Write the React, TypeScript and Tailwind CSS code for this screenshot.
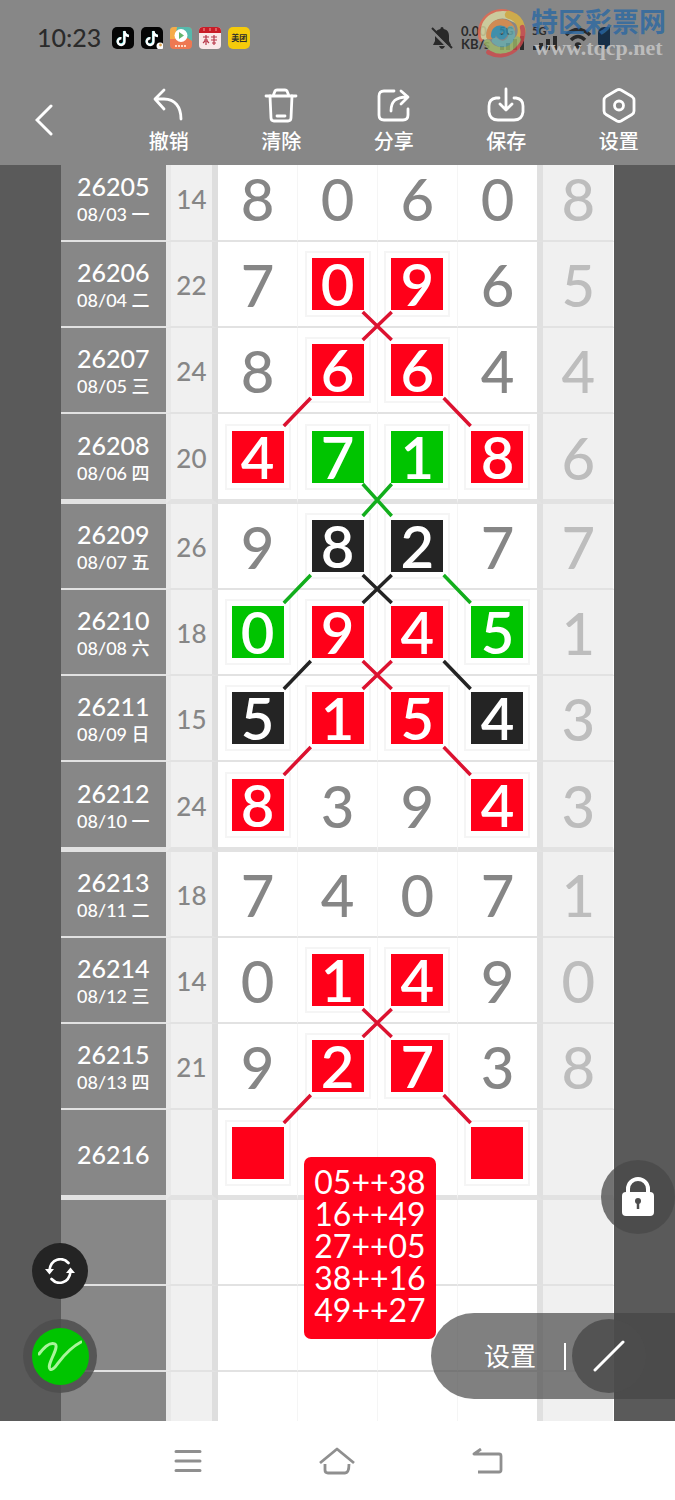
import React from "react";

type Mark = "r" | "g" | "k" | "";

interface Draw {
  issue: string;
  date?: string;
  sum?: number;
  digits: string;
  last?: string;
  marks?: Mark[];
}

const draws: Draw[] = [
  { issue: "26205", date: "08/03 一", sum: 14, digits: "8060", last: "8" },
  { issue: "26206", date: "08/04 二", sum: 22, digits: "7096", last: "5", marks: ["", "r", "r", ""] },
  { issue: "26207", date: "08/05 三", sum: 24, digits: "8664", last: "4", marks: ["", "r", "r", ""] },
  { issue: "26208", date: "08/06 四", sum: 20, digits: "4718", last: "6", marks: ["r", "g", "g", "r"] },
  { issue: "26209", date: "08/07 五", sum: 26, digits: "9827", last: "7", marks: ["", "k", "k", ""] },
  { issue: "26210", date: "08/08 六", sum: 18, digits: "0945", last: "1", marks: ["g", "r", "r", "g"] },
  { issue: "26211", date: "08/09 日", sum: 15, digits: "5154", last: "3", marks: ["k", "r", "r", "k"] },
  { issue: "26212", date: "08/10 一", sum: 24, digits: "8394", last: "3", marks: ["r", "", "", "r"] },
  { issue: "26213", date: "08/11 二", sum: 18, digits: "7407", last: "1" },
  { issue: "26214", date: "08/12 三", sum: 14, digits: "0149", last: "0", marks: ["", "r", "r", ""] },
  { issue: "26215", date: "08/13 四", sum: 21, digits: "9273", last: "8", marks: ["", "r", "r", ""] },
  { issue: "26216", digits: "    ", marks: ["r", "", "", "r"] },
  { issue: "", digits: "    " },
  { issue: "", digits: "    " },
  { issue: "", digits: "    " },
];

const markColor: Record<string, string> = {
  r: "bg-[#ff0019]",
  g: "bg-[#00c400]",
  k: "bg-[#242424]",
};

const RED = "#dc1230";
const GREEN = "#12ae1c";
const BLACK = "#242424";

/* Crossings sit between the two middle columns, branches fan out to the outer ones. */
const crossings: [number, string][] = [
  [170, RED],
  [344, GREEN],
  [433, BLACK],
  [519, RED],
  [867, RED],
];
const branches: [number, string][] = [
  [256, RED],
  [433, GREEN],
  [519, BLACK],
  [605, RED],
  [953, RED],
];

function TrendLines() {
  return (
    <svg
      className="pointer-events-none absolute inset-x-0 top-0 h-[1265px] w-full"
      viewBox="0 0 554 1265"
      preserveAspectRatio="none"
      fill="none"
      strokeWidth="3.500"
    >
      {crossings.map(([y, c]) => {
        const h = c === GREEN ? 16 : 14;
        return <path key={y} stroke={c} d={`M302 ${y - h}L331 ${y + h}M331 ${y - h}L302 ${y + h}`} />;
      })}
      {branches.map(([y, c]) => (
        <path key={y} stroke={c} d={`M250 ${y - 14}L223 ${y + 14}M383 ${y - 14}L410 ${y + 14}`} />
      ))}
    </svg>
  );
}

function DigitCell({ value, mark, edge, rule }: { value: string; mark: Mark; edge: boolean; rule: string }) {
  return (
    <td className={`bg-white p-0 ${rule} ${edge ? "border-r-6 border-r-[#e0e0e0]" : "border-r border-r-[#f5f5f5]"}`}>
      {mark ? (
        <div className="mx-auto flex size-[66px] items-center justify-center border-2 border-[#f5f5f5]">
          <div
            className={`flex size-[52px] items-center justify-center text-[58px] leading-none font-semibold text-white ${markColor[mark]}`}
          >
            {value.trim()}
          </div>
        </div>
      ) : (
        <div className="pt-[2px] text-center text-[58px] leading-none font-medium text-[#868686]">{value.trim()}</div>
      )}
    </td>
  );
}

function TrendTable() {
  return (
    <table className="w-full table-fixed border-separate border-spacing-0">
      <colgroup>
        <col className="w-[19%]" />
        <col className="w-[9.4%]" />
        <col className="w-[14.5%]" />
        <col className="w-[14.4%]" />
        <col className="w-[14.4%]" />
        <col className="w-[15.5%]" />
        <col className="w-[12.8%]" />
      </colgroup>
      <tbody>
        {draws.map((d, i) => {
          const thick = i % 4 === 3;
          const rule = thick ? "border-b-5 border-b-[#e2e2e2]" : "border-b-2 border-b-[#e2e2e2]";
          return (
            <tr key={i} className={thick ? "h-[90px]" : "h-[86px]"}>
              <th scope="row" className={`bg-[#878787] p-0 font-medium text-white ${rule}`}>
                <div className="pt-[2px] text-[25px] leading-[30px]">{d.issue}</div>
                {d.date && <div className="text-[18px] leading-[26px] font-medium">{d.date}</div>}
              </th>
              <td
                className={`border-r-6 border-l-5 border-r-[#dedede] border-l-[#e8e8e8] bg-[#f0f0f0] p-0 text-center text-[26px] font-medium text-[#868686] ${rule}`}
              >
                <div className="pt-[3px]">{d.sum}</div>
              </td>
              {d.digits.split("").map((v, n) => (
                <DigitCell key={n} value={v} mark={d.marks ? d.marks[n] : ""} edge={n === 3} rule={rule} />
              ))}
              <td className={`border-r border-r-white bg-[#f0f0f0] p-0 ${rule}`}>
                <div className="pt-[2px] text-center text-[58px] leading-none font-medium text-[#bdbdbd]">{d.last}</div>
              </td>
            </tr>
          );
        })}
      </tbody>
    </table>
  );
}

const tools: { label: string; icon: React.ReactNode }[] = [
  { label: "撤销", icon: <path d="M11 1L2 10L11 20M3 10H11C22 10 28 18 28 30" /> },
  {
    label: "清除",
    icon: (
      <>
        <path d="M1 7H31M8 7L10 2Q10.500 1 12 1H20Q21.500 1 22 2L24 7" />
        <path d="M5 7L6 29Q6.200 32 9 32H23Q25.800 32 26 29L27 7M12 27H20" />
      </>
    ),
  },
  {
    label: "分享",
    icon: (
      <>
        <path d="M16 2H6Q1 2 1 7V26Q1 31 6 31H25Q30 31 30 26V20" />
        <path d="M13 22C13 12 18 8 29 8M23 2L30 8L23 15" />
      </>
    ),
  },
  {
    label: "保存",
    icon: (
      <>
        <path d="M9 9H6Q-1 10 -1 17V23Q0 31 8 31H24Q32 31 33 23V17Q33 10 26 9H24" />
        <path d="M16 0V20M10 15L16 21L22 15" />
      </>
    ),
  },
  {
    label: "设置",
    icon: (
      <>
        <path d="M14 1Q16 0 18 1L29 7.500Q31 9 31 11V22Q31 24 29 25.500L18 32Q16 33 14 32L3 25.500Q1 24 1 22V11Q1 9 3 7.500Z" />
        <circle cx="16" cy="16.500" r="4.500" />
      </>
    ),
  },
];

function TikTokIcon({ badge }: { badge?: boolean }) {
  return (
    <svg className="size-[22px]" viewBox="0 0 22 22">
      <rect width="22" height="22" rx="5" fill="#050505" />
      <path d="M12 4V14A3.200 3.200 0 1 1 9 11M12 4C12.500 7 14 8.300 16.500 8.500" fill="none" stroke="#43dfe0" strokeWidth="2.200" />
      <path d="M12.500 4V14.300A3.400 3.400 0 1 1 9.500 11.200M12.500 4.500C13 7.500 14.500 8.800 17 9" fill="none" stroke="#fff" strokeWidth="2.400" />
      {badge && (
        <>
          <circle cx="19" cy="19" r="3.500" fill="#fff" />
          <circle cx="19.500" cy="18" r="1.400" fill="#d8a04b" />
        </>
      )}
    </svg>
  );
}

function StatusBar() {
  return (
    <div className="relative flex h-[75px] items-center gap-[7px] pl-[37px] text-[#2b2b2b]">
      <time className="mr-1 text-[25px] leading-none font-medium">10:23</time>
      <TikTokIcon />
      <TikTokIcon badge />
      <svg className="size-[22px]" viewBox="0 0 22 22">
        <rect width="22" height="22" rx="4" fill="#ee7852" />
        <path d="M4 0H18Q22 0 22 4V14L12 7L0 11V4Q0 0 4 0Z" fill="#56b9ac" />
        <path d="M0 4Q0 0 4 0H7L5 12H0Z" fill="#f6ab48" />
        <circle cx="11" cy="8.500" r="6.500" fill="#fff" />
        <path d="M9 5L14 8.500L9 12Z" fill="#65b56e" />
        <path d="M5 19H17" stroke="#ffd9c5" strokeWidth="2" strokeDasharray="2 1" />
      </svg>
      <svg className="size-[22px]" viewBox="0 0 22 22">
        <rect width="22" height="22" rx="4" fill="#fae9e9" />
        <path d="M0 6V4Q0 0 4 0H18Q22 0 22 4V6Z" fill="#c91c27" />
        <path d="M5 1V4M11 1V4M17 1V4" stroke="#f0a0a0" strokeWidth="1" />
        <path d="M4 10H10M7 8V18M5 13H9M4 16L6 14M10 16L8 14M12 10H18M15 8V18M12 13H18M13 16H17" stroke="#b73749" strokeWidth="1.200" />
      </svg>
      <span className="flex size-[22px] items-center justify-center rounded-[5px] bg-[#f5cb0b] text-[8px] leading-none font-bold">
        美团
      </span>
      <div className="absolute inset-y-0 right-[84px] flex items-center gap-[8px]">
        <svg className="size-[22px]" viewBox="0 0 22 22">
          <path d="M11 0Q12.500 0 12.700 2C17 3 18 6 18 9V14L20 18H2L4 14V9C4 6 5 3 9.300 2Q9.500 0 11 0ZM8 19H14Q13 22 11 22T8 19Z" fill="#292929" />
          <path d="M0 3L20 23" stroke="#878787" strokeWidth="3" />
          <path d="M1 1L21 21" stroke="#292929" strokeWidth="2" />
        </svg>
        <span className="w-[30px] text-[13px] leading-[13px] font-bold">
          0.00
          <br />
          KB/s
        </span>
        {[0, 1].map((n) => (
          <span key={n} className="flex flex-col text-[11px] leading-[10px] font-bold">
            5G
            <svg className="h-[14px] w-[25px]" viewBox="0 0 25 14" fill="#292929">
              <path d="M1 10H5V14H1ZM7 7H11V14H7ZM14 3H18V14H14ZM21 0H25V14H21Z" />
            </svg>
          </span>
        ))}
        <svg className="h-[22px] w-[26px]" viewBox="0 0 26 22" fill="none" stroke="#292929" strokeWidth="3.500">
          <path d="M1 8Q13 -3 25 8M6 13Q13 6 20 13" />
          <circle cx="13" cy="18.500" r="1.500" fill="#292929" />
        </svg>
      </div>
      <span className="absolute right-[36px] h-[22px] w-[41px] rounded-[6px] border-l-[12px] border-[#172f47] bg-[#7c8389]" />
      <div className="absolute top-[8px] right-[9px] flex items-center gap-[3px]">
        <svg className="size-[52px] opacity-80" viewBox="0 0 54 54" fill="none" strokeLinecap="round">
          <path d="M5 33C-1 14 18 -4 38 6" stroke="#e96950" strokeWidth="4" />
          <path d="M9 29C6 12 24 1 40 11" stroke="#dcdba2" strokeWidth="8" />
          <path d="M34 7C50 12 50 28 42 35" stroke="#dfb53e" strokeWidth="8" />
          <path d="M48 20C53 38 33 56 13 46" stroke="#cf494b" strokeWidth="5" />
          <path d="M43 33C34 48 18 46 12 36" stroke="#9fb969" strokeWidth="7" />
          <path d="M14 29C14 14 32 10 37 22" stroke="#e38c47" strokeWidth="7" />
          <path d="M36 22C41 34 28 42 20 34" stroke="#68aeb0" strokeWidth="7" />
          <path d="M18 29C18 16 34 20 30 28C26 34 20 26 25 24" stroke="#2e91b5" strokeWidth="5" />
        </svg>
        <div className="text-center">
          <div className="text-[27px] leading-[28px] font-bold text-[#2967a3]/80">特区彩票网</div>
          <div className="font-['Liberation_Serif',serif] text-[22px] leading-[24px] font-bold text-[#bcbcbc]">www.tqcp.net</div>
        </div>
      </div>
    </div>
  );
}

function Toolbar() {
  return (
    <nav className="grid h-[90px] grid-cols-6 text-white">
      <button aria-label="返回" className="flex items-center pl-[35px]">
        <svg className="h-[32px] w-[18px]" viewBox="0 0 18 32" fill="none" stroke="currentColor" strokeWidth="3" strokeLinecap="round">
          <path d="M16 2L2 16L16 30" />
        </svg>
      </button>
      {tools.map((t) => (
        <button key={t.label} className="flex flex-col items-center gap-[5px] pt-[13px]">
          <svg
            className="size-[34px] overflow-visible"
            viewBox="-1 -1 34 34"
            fill="none"
            stroke="currentColor"
            strokeWidth="2.800"
            strokeLinecap="round"
            strokeLinejoin="round"
          >
            {t.icon}
          </svg>
          <span className="text-[20px] leading-[28px] font-medium">{t.label}</span>
        </button>
      ))}
    </nav>
  );
}

function NavBar() {
  return (
    <footer className="grid h-[79px] shrink-0 grid-cols-3 bg-white px-[16.7%] text-[#8f8f8f]">
      <button aria-label="菜单" className="flex items-center justify-center">
        <svg className="h-[24px] w-[28px]" viewBox="0 0 28 24" stroke="currentColor" strokeWidth="3" strokeLinecap="round">
          <path d="M2 2.500H26M2 12H26M2 21.500H26" />
        </svg>
      </button>
      <button aria-label="主页" className="flex items-center justify-center">
        <svg className="h-[28px] w-[36px]" viewBox="0 0 36 28" fill="none" stroke="currentColor" strokeWidth="2.800" strokeLinejoin="round">
          <path d="M1 16L18 2L35 16M6 17V23Q6 26 9 26H26Q30 26 30 17" />
        </svg>
      </button>
      <button aria-label="后退" className="flex items-center justify-center">
        <svg className="h-[26px] w-[32px]" viewBox="0 0 32 26" fill="none" stroke="currentColor" strokeWidth="2.800" strokeLinejoin="round">
          <path d="M10 1L3 6H28Q30 6 30 8V22Q30 24 28 24H7" />
        </svg>
      </button>
    </footer>
  );
}

export default function App() {
  return (
    <div className="flex h-screen flex-col overflow-hidden bg-[#5a5a5a] font-[Lato,'Noto_Sans_CJK_SC',sans-serif]">
      <header className="relative z-10 shrink-0 bg-[#878787]">
        <StatusBar />
        <Toolbar />
      </header>

      <main className="relative min-h-0 flex-1 overflow-hidden px-[9%]">
        <div className="relative -mt-[9px]">
          <TrendTable />
          <TrendLines />
          <div className="absolute top-[1001px] left-[44%] rounded-[7px] bg-[#ff0019] px-[10px] pt-[9px] pb-[13px] text-[32px] leading-[32px] text-white">
            <p>05++38</p>
            <p>16++49</p>
            <p>27++05</p>
            <p>38++16</p>
            <p>49++27</p>
          </div>
        </div>

        <button
          aria-label="锁定"
          className="absolute right-0 bottom-[187px] flex size-[74px] items-center justify-center rounded-full bg-[#484848]/75"
        >
          <svg className="h-[40px] w-[34px]" viewBox="0 0 34 40" fill="none">
            <path d="M7 18V12A10 10 0 0 1 27 12V18" stroke="#fff" strokeWidth="4" />
            <rect x="1" y="15" width="32" height="24" rx="4" fill="#fff" />
            <circle cx="17" cy="24" r="3" fill="#4c4c4c" />
            <path d="M17 24V32" stroke="#4c4c4c" strokeWidth="2.500" />
          </svg>
        </button>

        <button
          aria-label="刷新"
          className="absolute bottom-[122px] left-[32px] flex size-[56px] items-center justify-center rounded-full bg-[#242424]"
        >
          <svg className="h-[26px] w-[30px]" viewBox="0 0 30 26" fill="none" stroke="#fff" strokeWidth="2.600" strokeLinecap="round">
            <path d="M4.500 12C6 1 17 -2 23.500 5M25.500 14C24 25 13 28 6.500 21" />
            <path d="M0 11H9L4.500 16.500ZM21 15H30L25.500 9.500Z" fill="#fff" stroke="none" />
          </svg>
        </button>

        <button
          aria-label="画笔"
          className="absolute bottom-[28px] left-[23px] flex size-[74px] items-center justify-center rounded-full bg-[#4d4d4d]/85"
        >
          <span className="flex size-[57px] items-center justify-center rounded-full bg-[#00c400]">
            <svg className="h-[32px] w-[44px]" viewBox="0 0 44 32" fill="none" stroke="#a9f59b" strokeWidth="3" strokeLinecap="round">
              <path d="M1 14C7 6 13 2 17 4C22 7 8 25 12 29C17 33 22 13 43 2" />
            </svg>
          </span>
        </button>

        <div className="absolute right-0 bottom-[22px] flex h-[86px] items-center rounded-l-full bg-[#444444]/68 pr-[29px] pl-[53px] text-white">
          <button className="text-[26px] leading-none">设置</button>
          <span className="ml-[28px] h-[27px] w-[2px] bg-white" />
          <button
            aria-label="画线"
            className="ml-[6px] flex size-[74px] items-center justify-center rounded-full bg-[#4c4c4c]/85"
          >
            <svg className="size-[32px]" viewBox="0 0 32 32" stroke="#fff" strokeWidth="3" strokeLinecap="round">
              <path d="M2 30L30 2" />
            </svg>
          </button>
        </div>
      </main>

      <NavBar />
    </div>
  );
}
